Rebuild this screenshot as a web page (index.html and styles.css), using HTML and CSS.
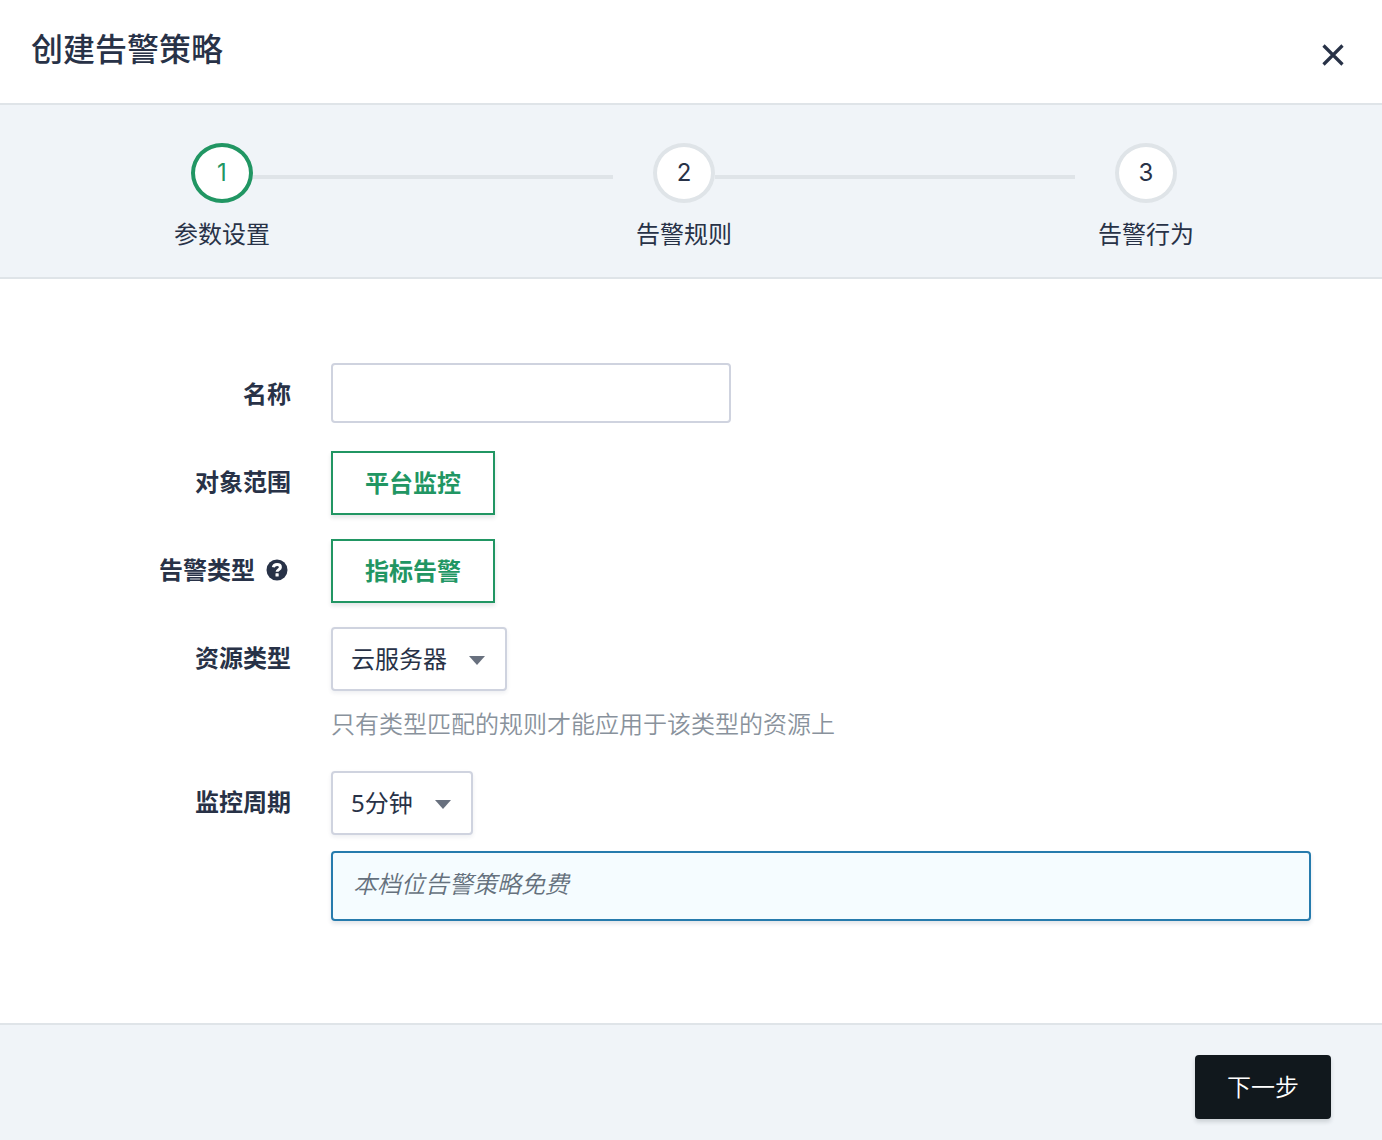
FILE: index.html
```html
<!DOCTYPE html>
<html lang="zh-CN">
<head>
<meta charset="utf-8">
<meta name="viewport" content="width=device-width, initial-scale=1">
<title>创建告警策略</title>
<link rel="stylesheet" href="styles.css">
</head>
<body>
<main class="dialog">
  <header class="dialog-header">
    <h1 class="dialog-title">创建告警策略</h1>
    <button class="close" type="button" aria-label="关闭">
      <svg width="24" height="24" viewBox="0 0 24 24" fill="none" stroke="currentColor" stroke-width="3.2" aria-hidden="true"><path d="M2.500 2.500l19 19M21.500 2.500l-19 19"/></svg>
    </button>
  </header>

  <ol class="steps">
    <li class="step step-active" aria-current="step">
      <div class="step-track"><span class="step-number">1</span><span class="step-line"></span></div>
      <span class="step-name">参数设置</span>
    </li>
    <li class="step">
      <div class="step-track"><span class="step-number">2</span><span class="step-line"></span></div>
      <span class="step-name">告警规则</span>
    </li>
    <li class="step">
      <div class="step-track"><span class="step-number">3</span></div>
      <span class="step-name">告警行为</span>
    </li>
  </ol>

  <form class="form" id="policy">
    <div class="row">
      <label class="label" for="name">名称</label>
      <div class="control"><input class="text-input" id="name" type="text"></div>
    </div>
    <div class="row">
      <span class="label" id="scope-label">对象范围</span>
      <div class="control" role="group" aria-labelledby="scope-label"><button class="choice" type="button">平台监控</button></div>
    </div>
    <div class="row">
      <span class="label label-help"><span id="type-label">告警类型</span>
        <svg class="help-icon" width="22" height="22" viewBox="0 0 22 22" aria-hidden="true"><circle cx="11" cy="11" r="10.5" fill="currentColor"/><path d="M7.300 8.300C7.800 6 9.300 5.500 11.100 5.500c2 0 3.300 1.100 3.300 2.700 0 2.400-3.300 2.400-3.300 4.600" fill="none" stroke="#fff" stroke-width="3"/><rect x="9.500" y="14.300" width="3.200" height="3.200" rx=".5" fill="#fff"/></svg>
      </span>
      <div class="control" role="group" aria-labelledby="type-label"><button class="choice" type="button">指标告警</button></div>
    </div>
    <div class="row">
      <label class="label" for="resource">资源类型</label>
      <div class="control">
        <div class="select">
          <select class="select-field" id="resource"><option>云服务器</option></select>
          <svg class="caret" width="16" height="9" viewBox="0 0 16 9" aria-hidden="true"><path d="M0 0h16L8 9z" fill="currentColor"/></svg>
        </div>
        <p class="hint">只有类型匹配的规则才能应用于该类型的资源上</p>
      </div>
    </div>
    <div class="row">
      <label class="label" for="period">监控周期</label>
      <div class="control">
        <div class="select">
          <select class="select-field" id="period"><option>5分钟</option></select>
          <svg class="caret" width="16" height="9" viewBox="0 0 16 9" aria-hidden="true"><path d="M0 0h16L8 9z" fill="currentColor"/></svg>
        </div>
        <p class="note">本档位告警策略免费</p>
      </div>
    </div>
  </form>

  <footer class="dialog-footer">
    <button class="next" type="submit" form="policy">下一步</button>
  </footer>
</main>
</body>
</html>
```
FILE: styles.css
```css
* {
  box-sizing: border-box;
}

body {
  margin: 0;
  background: #fff;
  color: #283247;
  font: 24px/40px "Noto Sans", "Noto Sans CJK SC", sans-serif;
}

button,
input,
select {
  font: inherit;
  color: inherit;
}

button {
  cursor: pointer;
}

.dialog {
  display: flex;
  flex-direction: column;
  min-height: 100vh;
}

.dialog-header {
  display: flex;
  justify-content: space-between;
  align-items: flex-start;
  padding: 25px 37px 30px 31px;
  border-bottom: 2px solid #dfe4e8;
}

.dialog-title {
  margin: 0;
  font-size: 32px;
  line-height: 48px;
  font-weight: 500;
}

.close {
  display: flex;
  margin-top: 18px;
  padding: 0;
  border: 0;
  background: none;
}

/* Steps */
.steps {
  display: grid;
  grid-template-columns: 1fr 1fr auto;
  margin: 0;
  padding: 38px 188px 23px 174px;
  list-style: none;
  background: #f0f4f8;
  border-bottom: 2px solid #dfe4e8;
}

.step-track {
  display: flex;
  align-items: center;
  padding: 0 23px 0 17px;
}

.step:last-child .step-track {
  padding-right: 17px;
}

.step-number {
  width: 62px;
  height: 60px;
  border: 4px solid #dfe4e8;
  border-radius: 50%;
  background: #fff;
  font-family: Inter, sans-serif;
  line-height: 52px;
  text-align: center;
}

.step-active .step-number {
  border-color: #219663;
  color: #219663;
}

.step-line {
  flex: 1;
  height: 4px;
  margin-top: 8px;
  background: #dfe4e8;
}

.step-name {
  display: block;
  margin-top: 11px;
}

/* Form */
.form {
  flex: 1;
  display: flex;
  flex-direction: column;
  gap: 24px;
  padding: 84px 71px 102px 0;
}

.row {
  display: grid;
  grid-template-columns: 291px 1fr;
  column-gap: 40px;
}

.label {
  line-height: 62px;
  font-weight: 700;
  text-align: right;
}

.label-help {
  display: flex;
  justify-content: flex-end;
  align-items: center;
  gap: 11px;
  height: 62px;
  padding-right: 3px;
}

.text-input {
  display: block;
  width: 400px;
  max-width: 100%;
  height: 60px;
  margin-bottom: 4px;
  padding: 0 18px;
  border: 2px solid #cfd3df;
  border-radius: 4px;
  background: #fff;
}

.choice {
  display: block;
  height: 64px;
  padding: 0 32px;
  border: 2px solid #219663;
  background: #fff;
  box-shadow: 0 3px 4px rgba(30, 50, 60, 0.12);
  color: #219663;
  font-weight: 700;
}

.select {
  display: inline-grid;
  align-items: center;
  vertical-align: top;
  color: #68707e;
}

.select-field {
  grid-area: 1 / 1;
  appearance: none;
  height: 64px;
  padding: 0 58px 0 18px;
  border: 2px solid #cfd3df;
  border-radius: 4px;
  background: #fff;
  box-shadow: 0 2px 4px rgba(30, 40, 80, 0.08);
  color: #283247;
}

.caret {
  grid-area: 1 / 1;
  justify-self: end;
  margin: 3px 22px 0 0;
  pointer-events: none;
}

.hint {
  margin: 12px 0 2px;
  line-height: 42px;
  color: #89929c;
  font-weight: 350;
}

.note {
  margin: 16px 0 0;
  padding: 11px 20px 15px;
  border: 2px solid #267bad;
  border-radius: 4px;
  background: #f5fcff;
  box-shadow: 0 3px 4px rgba(30, 50, 80, 0.12);
  color: #65717d;
  font-style: italic;
  font-weight: 350;
}

.dialog-footer {
  display: flex;
  justify-content: flex-end;
  padding: 30px 51px 21px;
  background: #f0f4f8;
  border-top: 2px solid #dfe4e8;
}

.next {
  height: 64px;
  padding: 0 32px;
  border: 0;
  border-radius: 4px;
  background: #11181d;
  box-shadow: 0 3px 4px rgba(20, 30, 40, 0.16);
  color: #fff;
  font-weight: 350;
}
```
